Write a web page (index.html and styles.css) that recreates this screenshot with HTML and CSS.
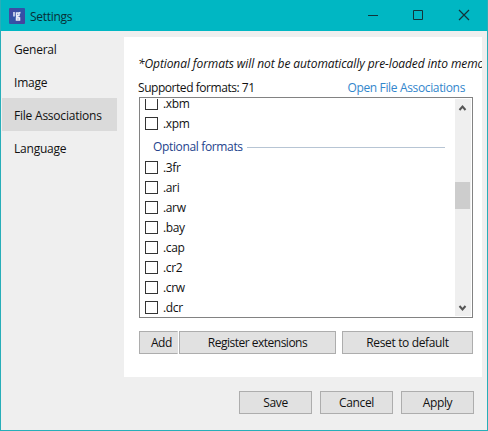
FILE: index.html
```html
<!DOCTYPE html>
<html lang="en">
<head>
<meta charset="utf-8">
<title>Settings</title>
<link rel="stylesheet" href="styles.css">
</head>
<body>
<div class="window">
  <header class="titlebar">
    <svg class="logo" width="16" height="16" viewBox="0 0 16 16">
      <defs><linearGradient id="lg" x1="0" y1="0" x2="1" y2="1"><stop offset="0" stop-color="#4a45a0"/><stop offset=".5" stop-color="#2f55a8"/><stop offset="1" stop-color="#4b3f9c"/></linearGradient></defs>
      <rect width="16" height="16" rx="1" fill="url(#lg)"/>
      <path d="M5 4v4.500M7.500 5h2.500v2.500H7.500zM11.500 4.500L10 5M7 8.500l3.500 1.500M7.500 10h3v2h-3z" fill="none" stroke="#e8edfa" stroke-width="1.500"/>
    </svg>
    <span class="title">Settings</span>
    <svg class="controls" width="120" height="31" viewBox="0 0 120 31" fill="none" stroke="#12343a" stroke-width="1">
      <path d="M1 15.500h10M46.500 10.500h9v9h-9z"/>
      <path d="M92 10l10 10M102 10l-10 10" stroke-width="1.200"/>
    </svg>
  </header>
  <main class="body">
    <nav class="sidebar">
      <a class="tab">General</a>
      <a class="tab">Image</a>
      <a class="tab active">File Associations</a>
      <a class="tab">Language</a>
    </nav>
    <section class="panel">
      <p class="note">*Optional formats will not be automatically pre-loaded into memo</p>
      <div class="summary"><span class="count">Supported formats: 71</span><a class="link">Open File Associations</a></div>
      <div class="list">
        <div class="rows">
          <label class="row"><i class="box"></i>.xbm</label>
          <label class="row"><i class="box"></i>.xpm</label>
          <div class="group"><span>Optional formats</span><i class="rule"></i></div>
          <label class="row"><i class="box"></i>.3fr</label>
          <label class="row"><i class="box"></i>.ari</label>
          <label class="row"><i class="box"></i>.arw</label>
          <label class="row"><i class="box"></i>.bay</label>
          <label class="row"><i class="box"></i>.cap</label>
          <label class="row"><i class="box"></i>.cr2</label>
          <label class="row"><i class="box"></i>.crw</label>
          <label class="row"><i class="box"></i>.dcr</label>
        </div>
        <div class="scrollbar">
          <svg width="16" height="17" viewBox="0 0 16 17"><path d="M4.500 11l3-3.500 3 3.500" fill="none" stroke="#555" stroke-width="2"/></svg>
          <div class="track"><div class="thumb"></div></div>
          <svg width="16" height="17" viewBox="0 0 16 17"><path d="M4.500 7l3 3.500 3-3.500" fill="none" stroke="#555" stroke-width="2"/></svg>
        </div>
      </div>
      <div class="actions">
        <button class="btn add">Add</button>
        <button class="btn register">Register extensions</button>
        <button class="btn reset">Reset to default</button>
      </div>
    </section>
  </main>
  <footer class="footer">
    <button class="btn">Save</button>
    <button class="btn">Cancel</button>
    <button class="btn">Apply</button>
  </footer>
</div>
</body>
</html>
```

FILE: styles.css
```css
* { box-sizing: border-box; }
body { margin: 0; font: 12px/16px "Open Sans", "Noto Sans", sans-serif; letter-spacing: -0.35px; color: #111; }
.window { width: 488px; height: 431px; display: flex; flex-direction: column; background: #efefef; border: 1px solid #27aeb9; border-top: 0; overflow: hidden; }
.titlebar { height: 31px; flex: none; display: flex; align-items: center; background: #00b7c3; padding-left: 8px; color: #073036; }
.logo { margin-right: 5px; }
.title { padding-top: 2px; letter-spacing: -0.3px; }
.controls { margin-left: auto; }
.body { display: flex; height: 346px; flex: none; }
.sidebar { width: 116px; padding-top: 1px; padding-left: 1px; letter-spacing: -0.22px; }
.tab { display: flex; align-items: center; height: 33px; padding: 2px 0 0 12px; white-space: nowrap; }
.active { background: #dadada; }
.panel { width: 358px; height: 340px; margin: 6px 0 0 7px; padding: 19px 9px 0 15px; background: #fff; overflow: hidden; }
.note { margin: 0 -9px 8px -1px; height: 16px; font-style: italic; white-space: nowrap; overflow: hidden; letter-spacing: -0.09px; }
.summary { display: flex; justify-content: space-between; height: 17px; padding-right: 8px; margin-left: -1px; }
.count { letter-spacing: -0.45px; }
.link { color: #3286cc; }
.list { display: flex; justify-content: space-between; height: 221px; border: 1px solid #828282; padding: 1px; overflow: hidden; }
.rows { width: 306px; padding-left: 4px; overflow: hidden; }
.row { display: flex; align-items: center; height: 20px; gap: 5px; }
.row:first-child { margin-top: -5px; }
.box { width: 13px; height: 13px; margin-bottom: 1px; border: 1px solid #333; background: #fff; }
.group { height: 24px; display: flex; align-items: center; gap: 4px; padding: 2px 0 0 8px; color: #24438c; }
.rule { flex: 1; height: 1px; background: #b7c5d4; margin-right: 2px; }
.scrollbar { width: 16px; display: flex; flex-direction: column; background: #efefef; }
.scrollbar svg { display: block; flex: none; }
.track { flex: 1; padding-top: 66px; }
.thumb { height: 27px; width: 15px; background: #cdcdcd; }
.actions { display: flex; margin-top: 13px; }
.btn { font: inherit; letter-spacing: inherit; color: inherit; height: 23px; width: 73px; padding: 0; border: 1px solid #adadad; background: #e1e1e1; }
.add { width: 39px; padding-left: 6px; border-right-color: #e1e1e1; margin-right: 1px; }
.register { width: 157px; letter-spacing: -0.5px; }
.reset { width: 131px; margin-left: 6px; }
.footer { display: flex; justify-content: flex-end; gap: 8px; padding: 14px 13px 0 0; }
```
